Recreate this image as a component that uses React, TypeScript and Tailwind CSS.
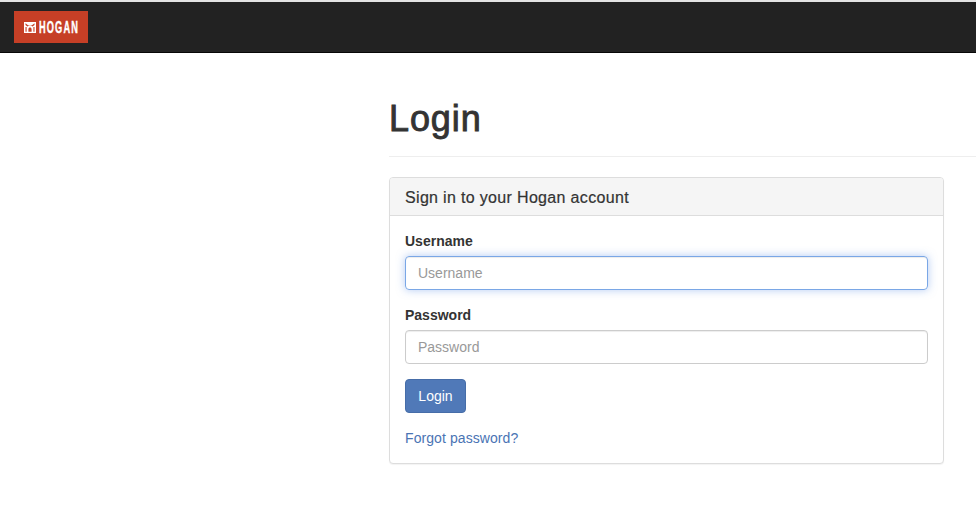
export default function App() {
  return (
    <div className="min-h-[509px] bg-white font-['Liberation_Sans',Arial,sans-serif] text-[14px] leading-[20px] text-[#333]">
      <nav className="h-[53px] border-t-2 border-t-[#e4e4e4] border-b border-b-[#080808] bg-[#222] pl-[14px] pt-[9px]">
        <a className="flex h-[32px] w-[74px] items-center gap-[3px] bg-[#c63f26] pl-[10px] text-white">
          <svg width="12" height="11" viewBox="0 0 12 11" className="shrink-0">
            <rect width="12" height="11" fill="#fff" />
            <path d="M1.5 1.2L4 3.2H8L10.5 1.2V3L8.6 4.6C8 3.8 7 3.4 6 3.4S4 3.8 3.4 4.6L1.5 3Z" fill="#c63f26" />
            <path d="M1.5 5H2.6V9.8H1.5ZM9.4 5H10.5V9.8H9.4ZM4.4 9.8V7.2C4.4 6.2 5.2 5.6 6 5.6S7.6 6.2 7.6 7.2V9.8Z" fill="#c63f26" />
          </svg>
          <span className="w-[40px] origin-left scale-x-[0.56] text-[16.5px] leading-[32px] font-bold tracking-[2px] whitespace-nowrap [-webkit-text-stroke:0.4px_#fff]">HOGAN</span>
        </a>
      </nav>
      <div className="flex">
        <div className="w-[389px] shrink-0" />
        <main className="flex-1">
          <div className="mt-[40px] h-[64px] border-b border-[#eee]">
            <h1 className="pt-[1px] text-[36px] leading-[50px] font-medium tracking-[0.9px] text-[#333] [-webkit-text-stroke:0.9px_#333]">Login</h1>
          </div>
          <section className="mt-[20px] mr-[32px] rounded-[4px] border border-[#ddd] bg-white shadow-[0_1px_1px_rgba(0,0,0,0.05)]">
            <div className="h-[38px] rounded-t-[3px] border-b border-[#ddd] bg-[#f5f5f5] px-[15px] text-[16px] leading-[39px] tracking-[0.33px] [-webkit-text-stroke:0.2px_#333]">
              Sign in to your Hogan account
            </div>
            <form className="px-[15px] pt-[15px] pb-[15px]">
              <label className="mb-[5px] block font-bold">Username</label>
              <input
                placeholder="Username"
                className="block h-[34px] w-full rounded-[4px] border border-[#7aa7e6] px-[12px] text-[14px] text-[#555] shadow-[inset_0_1px_1px_rgba(0,0,0,0.075),0_0_8px_rgba(102,150,233,0.5)] outline-none placeholder:text-[#999]"
              />
              <label className="mt-[15px] mb-[5px] block font-bold">Password</label>
              <input
                placeholder="Password"
                className="block h-[34px] w-full rounded-[4px] border border-[#ccc] px-[12px] text-[14px] text-[#555] shadow-[inset_0_1px_1px_rgba(0,0,0,0.075)] outline-none placeholder:text-[#999]"
              />
              <button type="button" className="mt-[15px] block h-[34px] w-[61px] rounded-[4px] border border-[#466da8] bg-[#5079b8] text-white">
                Login
              </button>
              <a className="mt-[15px] block tracking-[0.08px] text-[#4a74b4]">Forgot password?</a>
            </form>
          </section>
        </main>
      </div>
    </div>
  );
}
